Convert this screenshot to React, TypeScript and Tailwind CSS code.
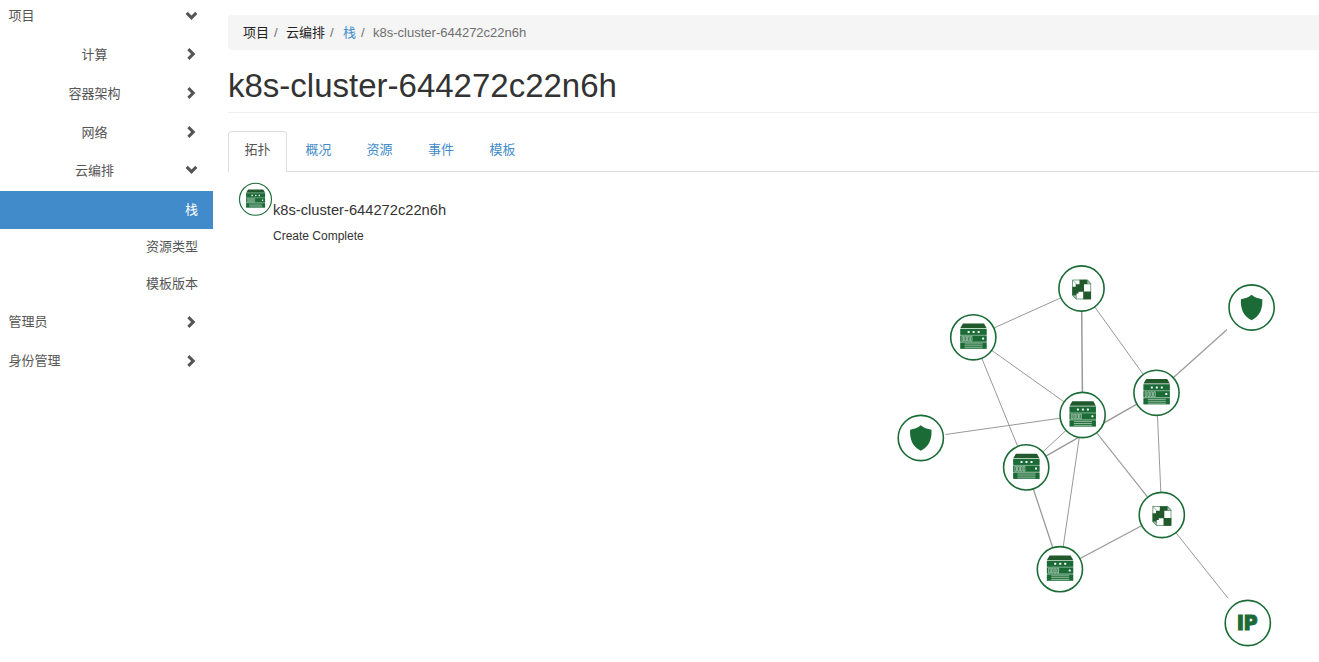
import React from "react";

type Kind = "server" | "template" | "shield" | "ip";

function Chevron({ open = false }: { open?: boolean }) {
  return (
    <svg
      width="13"
      height="12"
      viewBox="-6.5 -6 13 12"
      className={open ? "rotate-90" : ""}
      fill="#555"
    >
      <path d="M-4.2 -3.8 L-2.1 -5.9 L3.9 0 L-2.1 5.9 L-4.2 3.8 L-0.4 0 Z" />
    </svg>
  );
}

function Server() {
  return (
    <g>
      <path d="M-10.3 -13.7 H10.7 L13.3 -9.2 H-13 Z" fill="#21582c" />
      <rect x="-13" y="-8.7" width="26.3" height="20.2" fill="#8fb79d" />
      <g fill="#1a6b35">
        <rect x="-13" y="-8.4" width="26.3" height="5.9" />
        <rect x="-13" y="-1.6" width="26.3" height="5.9" />
        <rect x="-13" y="5.4" width="26.3" height="6.1" />
      </g>
      <g fill="#fff">
        <rect x="-5.7" y="-6.4" width="2" height="2" rx="0.5" />
        <rect x="-0.7" y="-6.4" width="2" height="2" rx="0.5" />
        <rect x="4.3" y="-6.4" width="2" height="2" rx="0.5" />
        <rect x="8.8" y="0.2" width="2" height="2" rx="0.5" />
      </g>
      <g fill="none" stroke="#b5d1be" strokeWidth="0.75">
        <path d="M-11.3 -1 h1.6 v4.8 h-1.6 z" />
        <path d="M-8.5 -1 h1.6 v4.8 h-1.6 z" />
        <path d="M-5.7 -1 h1.6 v4.8 h-1.6 z" />
        <path d="M-2.9 -1 h1.6 v4.8 h-1.6 z" />
        <path d="M-8.7 6.6 H9.3 M-8.7 8.5 H9.3 M-8.7 10.4 H9.3" />
      </g>
    </g>
  );
}

function Template() {
  return (
    <g>
      <path
        d="M-9 -8.5 H6 L9.2 -5.3 V10.5 H-5.4 L-9 6.8 Z"
        fill="#fff"
        stroke="#3f7f55"
        strokeWidth="0.7"
      />
      <path
        d="M-2 -8.7 H6 V-4.3 H2.5 V3 H9.5 V10.7 H1.7 V3.3 H-3 V5 H-5 V6.8 H-9.2 V-1.8 H-5.8 V-4.3 H-2 Z"
        fill="#21582c"
      />
      <path
        d="M-9 -8.5 L-5 -4.5 M5.8 -8.5 V-4.5 H9.3 Z M-9 6.8 H-5.2 V10.5 Z"
        fill="#a9c7b3"
        stroke="#3f7f55"
        strokeWidth="0.6"
      />
    </g>
  );
}

function Shield() {
  return (
    <path
      d="M0 -12.7 C3 -9.8 6.5 -8.9 10.7 -8.3 C11.2 1 8.5 8.5 0 12.7 C-8.5 8.5 -11.2 1 -10.7 -8.3 C-6.5 -8.9 -3 -9.8 0 -12.7 Z"
      fill="#1a6b35"
    />
  );
}

function Ip() {
  return (
    <text
      y="7.4"
      fill="#1a6b35"
      stroke="#1a6b35"
      strokeWidth="0.9"
      className="font-['Inter',sans-serif] text-[20px] font-black"
    >
      <tspan x="-10.4">I</tspan>
      <tspan x="-3.5">P</tspan>
    </text>
  );
}

const nodes: { x: number; y: number; kind: Kind }[] = [
  { x: 1081.5, y: 288.5, kind: "template" },
  { x: 973.3, y: 337.3, kind: "server" },
  { x: 1251.6, y: 307.5, kind: "shield" },
  { x: 1156.5, y: 392.8, kind: "server" },
  { x: 1082.6, y: 415, kind: "server" },
  { x: 920.8, y: 438, kind: "shield" },
  { x: 1026.2, y: 467.4, kind: "server" },
  { x: 1161.8, y: 515, kind: "template" },
  { x: 1059.9, y: 569.2, kind: "server" },
  { x: 1247.8, y: 623, kind: "ip" },
];

const links: [number, number, number][] = [
  [0, 1, 1],
  [0, 4, 1.5],
  [0, 3, 1],
  [1, 4, 1],
  [1, 6, 1],
  [4, 5, 1],
  [4, 6, 1],
  [6, 3, 1.4],
  [4, 7, 1.2],
  [4, 8, 1],
  [3, 7, 1],
  [3, 2, 1.2],
  [7, 8, 1.3],
  [7, 9, 1],
  [6, 8, 1.3],
];

const icons: Record<Kind, React.ReactNode> = {
  server: <Server />,
  template: <Template />,
  shield: <Shield />,
  ip: <Ip />,
};

function Topology() {
  return (
    <svg className="block h-[490px] w-[1091px]" viewBox="228 172 1091 490">
      {links.map(([a, b, w], i) => (
        <line
          key={i}
          x1={nodes[a].x}
          y1={nodes[a].y}
          x2={nodes[b].x}
          y2={nodes[b].y}
          stroke="#999"
          strokeWidth={w}
        />
      ))}
      {nodes.map((n, i) => (
        <g key={i} transform={`translate(${n.x} ${n.y})`}>
          {(n.kind === "shield" || n.kind === "ip") && (
            <rect x="-24.7" y="-24.7" width="49.4" height="49.4" fill="#fff" />
          )}
          <circle r="22.6" fill="#fff" stroke="#1a6b35" strokeWidth="1.6" />
          {icons[n.kind]}
        </g>
      ))}
      <g transform="translate(255.5 199.3)">
        <circle r="16" fill="#fff" stroke="#1a6b35" strokeWidth="1.1" />
        <g transform="scale(0.72)">
          <Server />
        </g>
      </g>
    </svg>
  );
}

function Group({ label, className, open }: { label: string; className: string; open?: boolean }) {
  return (
    <div className={`flex items-center justify-between pr-[15px] ${className}`}>
      <span className="-mt-px">{label}</span>
      <Chevron open={open} />
    </div>
  );
}

function SubGroup({ label, className, open }: { label: string; className: string; open?: boolean }) {
  return (
    <div className={`flex items-center pr-4 ${className}`}>
      <span className="w-[189px] shrink-0 text-center">{label}</span>
      <span className="-ml-1 flex">
        <Chevron open={open} />
      </span>
    </div>
  );
}

export default function App() {
  return (
    <div className="flex h-[662px] w-[1319px] overflow-hidden bg-white font-['Liberation_Sans','Noto_Sans_CJK_SC',sans-serif] text-[13px] leading-[19px] text-[#333]">
      <nav className="w-[213px] shrink-0 text-[#555]">
        <Group label="项目" className="h-[35px] pb-[3px] pl-[8.5px]" open />
        <SubGroup label="计算" className="h-[38px]" />
        <SubGroup label="容器架构" className="h-10" />
        <SubGroup label="网络" className="h-[38px]" />
        <SubGroup label="云编排" className="h-10 pb-0.5" open />
        <div className="flex h-[38px] items-center justify-end bg-[#428bca] pb-0.5 pr-[15px] text-white">栈</div>
        <div className="flex h-9 items-center justify-end pb-0.5 pr-[15px]">资源类型</div>
        <div className="flex h-[37px] items-center justify-end pr-[15px]">模板版本</div>
        <Group label="管理员" className="h-[39px] pl-[8.5px]" />
        <Group label="身份管理" className="h-[39px] pl-[8.5px]" />
      </nav>

      <main className="ml-[15px] min-w-0 flex-1">
        <div className="mt-[15px] flex h-[35px] items-center rounded-l bg-[#f5f5f5] pl-[15px] text-[#6f6f6f]">
          <span className="text-[#222]">项目</span>
          <span className="w-[17px] pl-[5px]">/</span>
          <span className="text-[#222]">云编排</span>
          <span className="w-[18px] pl-[5px]">/</span>
          <span className="text-[#428bca]">栈</span>
          <span className="w-[17px] pl-[5px]">/</span>
          <span>k8s-cluster-644272c22n6h</span>
        </div>
        <h1 className="flex h-[63px] items-center border-b border-[#eee] pt-[9px] text-[33px] leading-9">
          k8s-cluster-644272c22n6h
        </h1>
        <div className="mt-[18px] flex h-[41px] border-b border-[#ddd] text-[#428bca]">
          <div className="-mb-px h-[41px] w-[59px] rounded-t border border-b-0 border-[#ddd] bg-white pt-[8px] text-center text-[#555]">
            拓扑
          </div>
          <div className="w-[61px] pl-[2px] pt-[9px] text-center">概况</div>
          <div className="w-[61px] pl-[2px] pt-[9px] text-center">资源</div>
          <div className="w-[62px] pl-[2px] pt-[9px] text-center">事件</div>
          <div className="w-[61px] pl-[2px] pt-[9px] text-center">模板</div>
        </div>
        <div className="relative">
          <Topology />
          <div className="absolute left-[45px] top-[28px]">
            <div className="text-[14.7px] leading-5">k8s-cluster-644272c22n6h</div>
            <div className="mt-[7px] text-xs leading-[18px]">Create Complete</div>
          </div>
        </div>
      </main>
    </div>
  );
}
